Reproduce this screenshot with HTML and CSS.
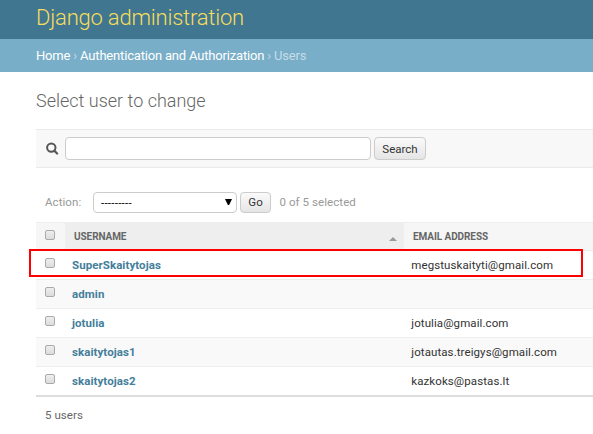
FILE: index.html
```
<!DOCTYPE html>
<html lang="en">
<head>
<meta charset="utf-8">
<title>Select user to change | Django administration</title>
<link rel="stylesheet" href="styles.css">
</head>
<body>
<header class="header"><span class="brand">Django administration</span></header>
<nav class="breadcrumbs"><a>Home</a> › <a>Authentication and Authorization</a> › Users</nav>
<main class="content">
  <h1>Select user to change</h1>
  <form class="toolbar">
    <svg class="magnifier" width="13" height="13" viewBox="0 0 13 13"><circle cx="5.3" cy="5.6" r="4.2" fill="none" stroke="#555" stroke-width="2"/><path d="M8.4 8.8L11.1 11.5" stroke="#555" stroke-width="2.2" stroke-linecap="round"/></svg>
    <input class="search" type="text" aria-label="Search">
    <button class="button" type="button">Search</button>
  </form>
  <div class="actions">
    <span class="action-label">Action:</span>
    <div class="select"><span>---------</span><svg width="7" height="7" viewBox="0 0 7 7"><path d="M0 0H7L4.1 6H2.9Z" fill="#000"/></svg></div>
    <button class="button go" type="button">Go</button>
    <span class="counter">0 of 5 selected</span>
  </div>
  <div class="results">
    <div class="row head">
      <div class="check"><i class="box"></i></div>
      <div class="name sorted"><span>USERNAME</span><i class="sort"></i></div>
      <div class="email"><span>EMAIL ADDRESS</span></div>
    </div>
    <div class="row"><div class="check"><i class="box"></i></div><div class="name"><a>SuperSkaitytojas</a></div><div class="email">megstuskaityti@gmail.com</div><div class="highlight"></div></div>
    <div class="row alt"><div class="check"><i class="box"></i></div><div class="name"><a>admin</a></div><div class="email"></div></div>
    <div class="row"><div class="check"><i class="box"></i></div><div class="name"><a>jotulia</a></div><div class="email">jotulia@gmail.com</div></div>
    <div class="row alt"><div class="check"><i class="box"></i></div><div class="name"><a>skaitytojas1</a></div><div class="email">jotautas.treigys@gmail.com</div></div>
    <div class="row"><div class="check"><i class="box"></i></div><div class="name"><a>skaitytojas2</a></div><div class="email">kazkoks@pastas.lt</div></div>
  </div>
  <p class="paginator">5 users</p>
</main>
</body>
</html>
```
FILE: styles.css
```
* { box-sizing: border-box; }
body {
  margin: 0;
  background: #fff;
  color: #333;
  font: 11.5px/16px Roboto, "Liberation Sans", sans-serif;
  overflow: hidden;
}
.header {
  height: 39px;
  padding: 5px 36px 0;
  background: #417690;
  color: #f5dd5d;
}
.brand { font-size: 22px; line-height: 26px; font-weight: 300; letter-spacing: -0.2px; }
.breadcrumbs {
  height: 33px;
  padding: 9px 36px 0;
  background: #79aec8;
  color: #c4dce8;
  font-size: 13px;
  letter-spacing: -0.18px;
}
.breadcrumbs a { color: #fff; }
.content { padding-left: 36px; }
h1 {
  margin: 18px 0 17px;
  font-size: 18px;
  line-height: 22px;
  font-weight: 300;
  color: #666;
}
.toolbar {
  display: flex;
  align-items: center;
  height: 39px;
  padding-left: 10px;
  border: solid #eaeaea;
  border-width: 1px 0;
  background: #f8f8f8;
}
.magnifier { margin-right: 6px; flex: none; }
.search {
  width: 306px;
  height: 23px;
  padding: 0 5px;
  border: 1px solid #ccc;
  border-radius: 4px;
  background: #fff;
}
.button {
  width: 52px;
  height: 23px;
  margin-left: 3px;
  padding: 0;
  border: 1px solid #ccc;
  border-radius: 4px;
  background: linear-gradient(#fafafa, #e5e5e5);
  color: #333;
  font: 11.5px Roboto, sans-serif;
}
.actions {
  display: flex;
  align-items: center;
  height: 21px;
  margin: 24px 0 9px;
  padding-left: 9px;
  color: #999;
}
.action-label, .select, .counter { letter-spacing: 0.07px; }
.actions > span, .select > span, .go { position: relative; top: -1px; }
.go { top: 0; padding-bottom: 1px; }
.action-label { width: 48px; }
.select {
  display: flex;
  align-items: center;
  justify-content: space-between;
  width: 144px;
  height: 21px;
  padding: 0 4px 0 7px;
  border: 1px solid #ccc;
  border-radius: 4px;
  background: #fff;
  color: #000;
}
.select > span { top: 0; letter-spacing: 0.25px; }
.go { width: 31px; height: 21px; }
.counter { margin-left: 8.5px; }
.results { border-top: 1px solid #eee; border-bottom: 1px solid #ddd; }
.row {
  position: relative;
  display: flex;
  height: 29px;
  border-bottom: 1px solid #eee;
}
.alt { background: #f9f9f9; }
.row:last-child { border-color: #ddd; }
.check { width: 29px; padding: 7px 0 0 9px; }
.box {
  display: block;
  width: 10px;
  height: 10px;
  border: 1px solid #aaa;
  border-radius: 2px;
  background: linear-gradient(#eee, #dcdcdc);
}
.name { width: 339px; padding: 6px 0 0 7px; }
.name a { color: #447e9b; font-weight: 700; letter-spacing: 0.07px; }
.email { flex: 1; padding: 6px 0 0 7.3px; letter-spacing: 0.09px; }
.head {
  height: 28px;
  background: #f6f6f6;
  color: #666;
  font-size: 10px;
  font-weight: 700;
}
.head .name, .head .email { padding: 6px 7px 0 9px; letter-spacing: -0.08px; }
.sorted { display: flex; justify-content: space-between; background: #eee; }
.sort {
  width: 0;
  height: 0;
  margin-top: 8px;
  border: solid transparent;
  border-width: 0 4px 4px;
  border-bottom-color: #999;
}
.highlight {
  position: absolute;
  left: -7px;
  top: -2px;
  width: 554px;
  height: 28px;
  border: 2px solid #f00;
}
.paginator { margin: 10px 0 0 9px; color: #666; letter-spacing: 0.07px; }
```
